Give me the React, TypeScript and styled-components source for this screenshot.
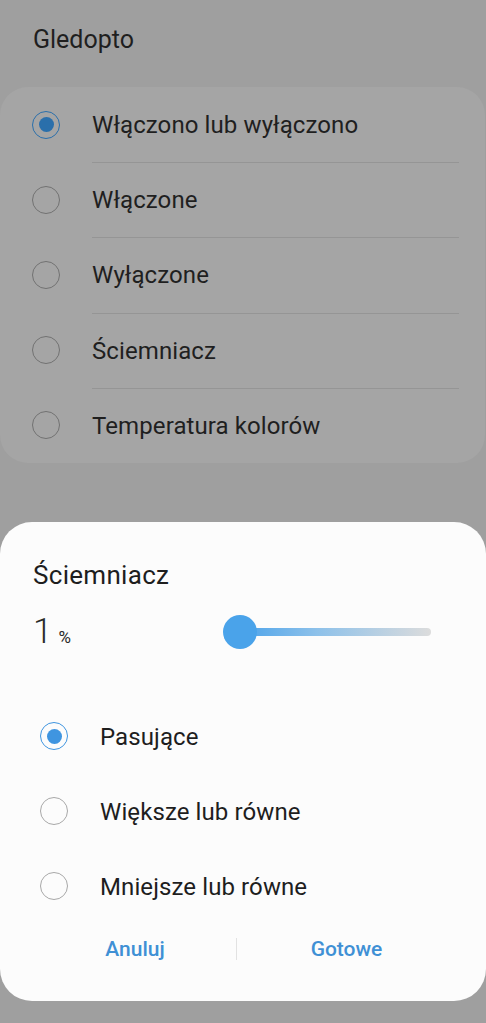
import React from 'react';
import styled, { createGlobalStyle } from 'styled-components';

const GlobalStyle = createGlobalStyle`
  html, body {
    margin: 0;
    padding: 0;
    background: #9f9f9f;
  }
  body {
    font-family: Roboto, "Noto Sans", "Liberation Sans", sans-serif;
    -webkit-font-smoothing: antialiased;
  }
`;

const Page = styled.div`
  width: 486px;
  min-height: 1023px;
  background: #9f9f9f;
  display: flex;
  flex-direction: column;
  overflow: hidden;
`;

const Header = styled.div`
  height: 87px;
  padding: 22px 0 0 33px;
  box-sizing: border-box;
  font-size: 25px;
  line-height: 36px;
  color: #1f1f1f;
`;

const Card = styled.div`
  background: #a5a5a5;
  border-radius: 28px;
  display: flex;
  flex-direction: column;
  width: 485px;
`;

const Row = styled.div<{ $height: number; $inset: number; $gap: number }>`
  height: ${({ $height }) => $height}px;
  display: flex;
  align-items: center;
  padding-left: ${({ $inset }) => $inset}px;
  gap: ${({ $gap }) => $gap}px;
`;

const Label = styled.div<{ $divided?: boolean; $color: string }>`
  flex: 1;
  align-self: stretch;
  display: flex;
  align-items: center;
  margin-right: 26px;
  font-size: 24px;
  letter-spacing: 0.1px;
  color: ${({ $color }) => $color};
  border-top: ${({ $divided }) => ($divided ? '1px solid #959595' : '1px solid transparent')};
  box-sizing: border-box;
`;

const Radio = styled.span<{ $on?: boolean; $ring: string; $off: string }>`
  width: 28px;
  height: 28px;
  flex: none;
  box-sizing: border-box;
  border-radius: 50%;
  border: 1.6px solid ${({ $on, $ring, $off }) => ($on ? $ring : $off)};
  display: flex;
  align-items: center;
  justify-content: center;
  &::after {
    content: '';
    display: ${({ $on }) => ($on ? 'block' : 'none')};
    width: 15px;
    height: 15px;
    border-radius: 50%;
    background: ${({ $ring }) => $ring};
  }
`;

const Sheet = styled.div`
  margin-top: 59px;
  height: 479px;
  background: #fcfcfc;
  border-radius: 32px;
  box-sizing: border-box;
  padding-top: 38px;
  display: flex;
  flex-direction: column;
`;

const SheetTitle = styled.div`
  padding-left: 33px;
  font-size: 26px;
  letter-spacing: 0.3px;
  line-height: 30px;
  color: #1e1e1e;
`;

const ValueRow = styled.div`
  margin-top: 22px;
  height: 40px;
  display: flex;
  align-items: center;
  padding-left: 33px;
`;

const Value = styled.div`
  width: 190px;
  font-weight: 300;
  font-size: 35px;
  color: #2a2a2a;
  display: flex;
  align-items: baseline;
  gap: 6px;
  span {
    font-size: 17px;
    font-weight: 400;
  }
`;

const Slider = styled.div`
  position: relative;
  width: 208px;
  height: 34px;
  display: flex;
  align-items: center;
`;

const Track = styled.div`
  margin-left: 17px;
  flex: 1;
  height: 8px;
  border-radius: 4px;
  background: linear-gradient(90deg, #4ca3ea 0%, #8dc1ea 40%, #dcdcdc 100%);
`;

const Thumb = styled.div`
  position: absolute;
  left: 0;
  top: 0;
  width: 34px;
  height: 34px;
  border-radius: 50%;
  background: #4aa3ea;
`;

const Options = styled.div`
  margin-top: 47px;
  display: flex;
  flex-direction: column;
`;

const Buttons = styled.div`
  height: 50px;
  display: grid;
  grid-template-columns: 236px 1px 1fr;
  align-items: center;
`;

const Action = styled.div<{ $shift: number }>`
  text-align: center;
  font-size: 21px;
  font-weight: 500;
  color: #3f90d5;
  transform: translateX(${({ $shift }) => $shift}px);
`;

const Sep = styled.div`
  height: 22px;
  background: #e2e2e2;
`;

const topItems = [
  'Włączono lub wyłączono',
  'Włączone',
  'Wyłączone',
  'Ściemniacz',
  'Temperatura kolorów',
];

const sheetItems = ['Pasujące', 'Większe lub równe', 'Mniejsze lub równe'];

export default function App() {
  return (
    <Page>
      <GlobalStyle />
      <Header>Gledopto</Header>
      <Card>
        {topItems.map((t, i) => (
          <Row key={t} $height={75.2} $inset={32} $gap={32}>
            <Radio $on={i === 0} $ring="#2a6fab" $off="#727272" />
            <Label $divided={i > 0} $color="#1f1f1f">
              {t}
            </Label>
          </Row>
        ))}
      </Card>
      <Sheet>
        <SheetTitle>Ściemniacz</SheetTitle>
        <ValueRow>
          <Value>
            1<span>%</span>
          </Value>
          <Slider>
            <Track />
            <Thumb />
          </Slider>
        </ValueRow>
        <Options>
          {sheetItems.map((t, i) => (
            <Row key={t} $height={75} $inset={40} $gap={32}>
              <Radio $on={i === 0} $ring="#3f95e0" $off="#a8a8a8" />
              <Label $color="#1e1e1e">{t}</Label>
            </Row>
          ))}
        </Options>
        <Buttons>
          <Action $shift={17}>Anuluj</Action>
          <Sep />
          <Action $shift={-15}>Gotowe</Action>
        </Buttons>
      </Sheet>
    </Page>
  );
}
